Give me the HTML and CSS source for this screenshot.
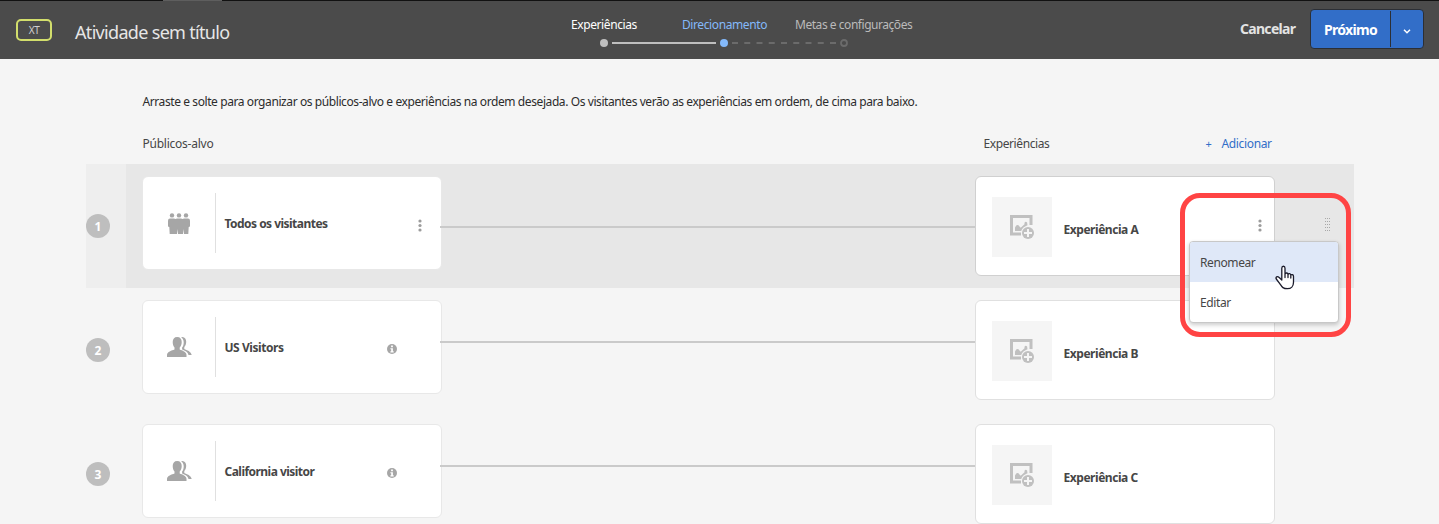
FILE: index.html
```html
<!DOCTYPE html>
<html lang="pt">
<head>
<meta charset="utf-8">
<title>Atividade sem título</title>
<link rel="stylesheet" href="styles.css">
</head>
<body>
<svg width="0" height="0" class="defs" aria-hidden="true">
  <symbol id="people" viewBox="0 0 22 21">
    <g fill="#a6a6a6">
      <circle cx="4" cy="2.4" r="2.2"/><circle cx="11" cy="2.4" r="2.2"/><circle cx="18" cy="2.4" r="2.2"/>
      <path d="M2 5.500h4l1.500.5 1.500-.5h4l1.500.5 1.500-.5h4q2 0 2 2.200v5.300q0 1-1.300 1l-.4 7h-4.300l-.5-5-.5 5h-5l-.5-5-.5 5H1.700l-.4-7Q0 14 0 13V7.700Q0 5.500 2 5.500z"/>
    </g>
  </symbol>
  <symbol id="segment" viewBox="0 0 25 20">
    <g fill="#a6a6a6">
      <path d="M10.200 0c3 0 4.500 2 4.500 5 0 2.300-.8 4.300-2 5.500v2c2.500 1 6.800 2.200 6.800 5.500v2H0v-2c0-3.300 4.800-4.500 7.500-5.500v-2C6.400 9.300 5.700 7.300 5.700 5c0-3 1.500-5 4.500-5z"/>
      <path d="M14.200.2c3.500-.6 5 1.800 5 4.600 0 2.300-.7 3.900-1.900 5.200v1.900c2.500 1 6.900 2.600 7.400 6.100h-3.200c-.5-2.900-3.500-4.200-6.400-5.400v-2c1.200-1.500 1.600-3.300 1.600-5.400 0-2-.8-3.800-2.500-5z"/>
    </g>
  </symbol>
  <symbol id="image-add" viewBox="0 0 24 24">
    <path d="M21 10V1.500H1.500V19H11" fill="none" stroke="#c0c0c0" stroke-width="3"/>
    <path d="M5 16v-3.500l1.200-2q1.800-1.200 3.300 1l1.200 1.200 3.800-3.500V7.800q1-1.800 2.600-.4l.4 2.800Q12 12.500 11.200 16z" fill="#c0c0c0"/>
    <circle cx="18" cy="18" r="6" fill="#c0c0c0"/>
    <path d="M18 14v8M14 18h8" stroke="#f5f5f5" stroke-width="2"/>
  </symbol>
  <symbol id="kebab" viewBox="0 0 4 13">
    <g fill="#9c9c9c"><circle cx="2" cy="2" r="1.600"/><circle cx="2" cy="6.500" r="1.600"/><circle cx="2" cy="11" r="1.600"/></g>
  </symbol>
  <symbol id="info" viewBox="0 0 10 10">
    <circle cx="5" cy="5" r="5" fill="#a6a6a6"/>
    <path d="M4.100 1.600h1.800v1.600H4.100zM3.400 4.200h2.500v3h.8v1.200H3.400V7.200h.8V5.300h-.8z" fill="#fff"/>
  </symbol>
</svg>

<header class="topbar">
  <span class="type">XT</span>
  <h1 class="title">Atividade sem título</h1>
  <nav class="steps">
    <div class="step-labels">
      <span class="step done">Experiências</span>
      <span class="step current">Direcionamento</span>
      <span class="step next">Metas e configurações</span>
    </div>
    <svg class="track" width="248" height="10" viewBox="0 0 248 10">
      <circle cx="4" cy="5" r="4" fill="#bfbfbf"/>
      <path d="M12 5h104" stroke="#bfbfbf" stroke-width="2"/>
      <circle cx="124" cy="5" r="4" fill="#84b9fa"/>
      <path d="M132 5h105" stroke="#6b6b6b" stroke-width="2" stroke-dasharray="6 6.250"/>
      <circle cx="244" cy="5" r="3" fill="none" stroke="#6b6b6b" stroke-width="1.800"/>
    </svg>
  </nav>
  <span class="cancel">Cancelar</span>
  <div class="next-group">
    <span class="next-main">Próximo</span>
    <span class="next-more"><svg width="8" height="5" viewBox="0 0 8 5"><path d="M1 .8l3 3 3-3" fill="none" stroke="#fff" stroke-width="1.500"/></svg></span>
  </div>
</header>

<main class="content">
  <p class="intro">Arraste e solte para organizar os públicos-alvo e experiências na ordem desejada. Os visitantes verão as experiências em ordem, de cima para baixo.</p>
  <div class="heads">
    <span class="head-audience">Públicos-alvo</span>
    <span class="head-exp">Experiências</span>
    <span class="add"><span class="plus">+</span>Adicionar</span>
  </div>

  <section class="row active">
    <div class="index"><span class="num">1</span></div>
    <div class="card audience">
      <div class="pic"><svg width="22" height="21"><use href="#people"/></svg></div>
      <span class="name wide">Todos os visitantes</span>
      <svg class="more" width="4" height="13"><use href="#kebab"/></svg>
    </div>
    <div class="link"></div>
    <div class="card experience">
      <div class="thumb"><svg width="24" height="24"><use href="#image-add"/></svg></div>
      <span class="name">Experiência A</span>
      <svg class="more" width="4" height="13"><use href="#kebab"/></svg>
    </div>
    <svg class="grip" width="6" height="14" viewBox="0 0 6 14"><path d="M.5 0v14M2.500 0v14M4.500 0v14" stroke="#a8a8a8" stroke-width="1" stroke-dasharray="1 2"/></svg>
    <div class="menu">
      <span class="item hover">Renomear</span>
      <span class="item">Editar</span>
    </div>
    <svg class="pointer" width="20" height="26" viewBox="0 0 20 26"><path d="M6.800 15V3.200c0-2.600 3.200-2.600 3.200 0V9c.3-1.500 2.900-1.300 3 .4.500-1.300 2.700-1 2.800.7.700-1 2.700-.5 2.700 1.300v5.800c0 4-2.500 6.500-6 6.500-4.600 0-5.500-1.700-7.200-4.300L1.300 14c-1-2 1.100-3.200 2.600-1.700L6.800 15zM10 8.500v4M13 9.500v3M15.800 10.500v2.500" fill="#fff" stroke="#1b1b2b" stroke-width="1.300" stroke-linejoin="round" stroke-linecap="round"/></svg>
    <div class="callout"></div>
  </section>

  <section class="row">
    <div class="index"><span class="num">2</span></div>
    <div class="card audience">
      <div class="pic"><svg width="25" height="20"><use href="#segment"/></svg></div>
      <span class="name">US Visitors</span>
      <svg class="info" width="10" height="10"><use href="#info"/></svg>
    </div>
    <div class="link"></div>
    <div class="card experience">
      <div class="thumb"><svg width="24" height="24"><use href="#image-add"/></svg></div>
      <span class="name">Experiência B</span>
    </div>
  </section>

  <section class="row">
    <div class="index"><span class="num">3</span></div>
    <div class="card audience">
      <div class="pic"><svg width="25" height="20"><use href="#segment"/></svg></div>
      <span class="name wide">California visitor</span>
      <svg class="info" width="10" height="10"><use href="#info"/></svg>
    </div>
    <div class="link"></div>
    <div class="card experience">
      <div class="thumb"><svg width="24" height="24"><use href="#image-add"/></svg></div>
      <span class="name">Experiência C</span>
    </div>
  </section>
</main>
</body>
</html>
```
FILE: styles.css
```css
* { box-sizing: border-box; }
body {
  margin: 0;
  height: 524px;
  overflow: hidden;
  background: #f5f5f5;
  color: #464646;
  font: 12px/16px "Noto Sans", "Open Sans", sans-serif;
  letter-spacing: -0.4px;
  white-space: nowrap;
}
svg { display: block; flex: none; }
.defs { position: absolute; }

.topbar {
  display: grid;
  grid-template-columns: 36px 23px 496px 341px 1fr 55px 15px 114px;
  height: 59px;
  padding: 0 15px 0 16px;
  background: linear-gradient(#5e5e5e, #5e5e5e) 163px 0 / 59px 1px no-repeat,
    linear-gradient(#111, #111) 0 0 / 100% 1px no-repeat, #4b4b4b;
}
.type {
  height: 22px;
  margin-top: 19px;
  border: 2px solid #d2de6c;
  border-radius: 5px;
  color: #d0d0d0;
  font-size: 10px;
  line-height: 18px;
  text-align: center;
}
.title {
  grid-column: 3;
  margin: 19px 0 0;
  color: #e6e6e6;
  font-size: 18px;
  font-weight: 400;
  line-height: 26px;
  letter-spacing: -0.68px;
}
.steps { grid-column: 4; padding-top: 17px; }
.step { flex: none; }
.step-labels { display: flex; }
.done { width: 111px; color: #fff; }
.current { width: 113px; color: #84b9fa; }
.next { color: #bababa; letter-spacing: -0.46px; }
.track { margin: 5px 0 0 29px; }
.cancel {
  grid-column: 6;
  padding-top: 19px;
  color: #e3e3e3;
  font-size: 14px;
  font-weight: 700;
  line-height: 20px;
  letter-spacing: -0.7px;
}
.next-group {
  grid-column: 8;
  display: flex;
  height: 40px;
  margin-top: 9px;
  border: 1px solid #2c2f35;
  border-radius: 4px;
  background: #326ec8;
}
.next-main {
  width: 80px;
  margin: 1px 0;
  padding-left: 13px;
  border-right: 1px solid #2c2f35;
  color: #fff;
  font-size: 14px;
  font-weight: 700;
  line-height: 38px;
  letter-spacing: -0.68px;
}
.next-more { display: grid; flex: 1; place-items: center; padding-top: 4px; }

.content { width: 1268px; margin-left: 86px; }
.intro {
  margin: 0;
  padding: 35px 0 0 56.5px;
  color: #2c2c2c;
  letter-spacing: -0.41px;
}
.heads { display: flex; padding: 26px 0 12px 56.5px; }
.head-audience { width: 841px; letter-spacing: -0.24px; }
.head-exp { width: 222px; }
.add { display: flex; color: #326ec8; letter-spacing: -0.35px; }
.plus { width: 16px; font-size: 11px; }

.row {
  position: relative;
  display: flex;
  align-items: flex-start;
  height: 124px;
  padding-right: 79px;
}
.active { background: #e7e7e7; }
.active .index { background: #eee; }
.index { width: 40px; height: 124px; padding-top: 50px; margin-right: 16px; }
.num {
  display: block;
  width: 24px;
  height: 24px;
  border-radius: 50%;
  background: #bebebe;
  color: #fff;
  font-weight: 700;
  line-height: 25px;
  letter-spacing: 0;
  text-align: center;
}
.card {
  display: flex;
  align-items: center;
  flex: none;
  width: 300px;
  margin-top: 12px;
  border: 1px solid #e8e8e8;
  border-radius: 6px;
  background: #fff;
}
.audience { height: 94px; }
.experience { height: 100px; border-color: #e0e0e0; padding-left: 16px; }
.active .experience { border-color: #d0d0d0; }
.pic {
  display: grid;
  place-items: center;
  width: 73px;
  height: 60px;
  border-right: 1px solid #e0e0e0;
}
.name { font-weight: 700; letter-spacing: -0.45px; }
.name.wide { letter-spacing: -0.53px; }
.audience .name { flex: 1; margin: 2px 0 0 8.5px; }
.experience .name { flex: 1; margin: 7px 0 0 11.5px; }
.audience .more { margin: 4px 19.500px 0 0; }
.experience .more { margin: -2px 12px 0 0; }
.info { margin: 3px 44.500px 0 0; }
.thumb {
  display: grid;
  place-items: center;
  width: 60px;
  height: 60px;
  margin-top: 2px;
  background: #f5f5f5;
}
.link { flex: 1; height: 2px; margin: 53px 0 0 -2px; background: #cacaca; }
.active .link { margin-top: 62px; }

.grip { position: absolute; top: 54px; left: 1239px; }
.menu {
  position: absolute;
  z-index: 2;
  top: 77px;
  left: 1103px;
  width: 150px;
  height: 82px;
  border: 1px solid #c8c8c8;
  border-radius: 4px;
  background: #fff;
  box-shadow: 0 2px 4px rgba(0, 0, 0, 0.2);
  overflow: hidden;
}
.item { display: block; height: 40px; padding-left: 10px; line-height: 41px; }
.hover { background: #dfe8f8; }
.pointer { position: absolute; z-index: 4; top: 101px; left: 1189px; }
.callout {
  position: absolute;
  z-index: 3;
  top: 29px;
  left: 1094px;
  width: 171px;
  height: 144px;
  border: 5px solid #ff4444;
  border-radius: 20px;
}
```
